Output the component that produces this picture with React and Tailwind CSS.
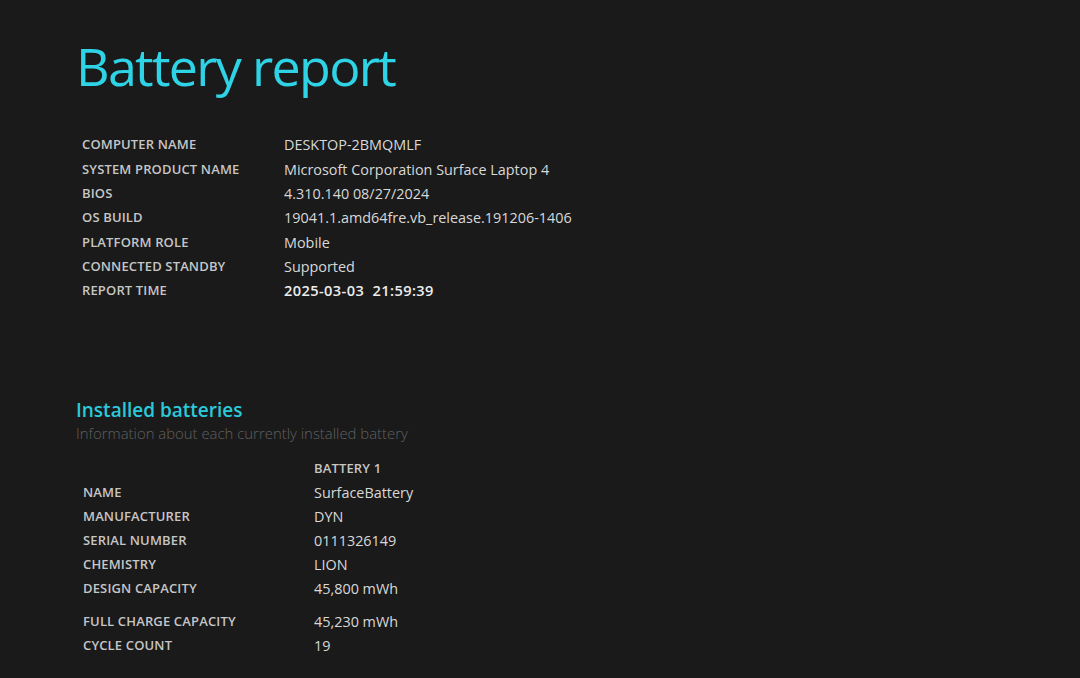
import React from "react";

const info = [
  ["COMPUTER NAME", "DESKTOP-2BMQMLF"],
  ["SYSTEM PRODUCT NAME", "Microsoft Corporation Surface Laptop 4"],
  ["BIOS", "4.310.140 08/27/2024"],
  ["OS BUILD", "19041.1.amd64fre.vb_release.191206-1406"],
  ["PLATFORM ROLE", "Mobile"],
  ["CONNECTED STANDBY", "Supported"],
];

const battery = [
  ["NAME", "SurfaceBattery"],
  ["MANUFACTURER", "DYN"],
  ["SERIAL NUMBER", "0111326149"],
  ["CHEMISTRY", "LION"],
  ["DESIGN CAPACITY", "45,800 mWh"],
];

const font = { fontFamily: '"Open Sans", "Noto Sans", sans-serif' };

const labelCls = "text-[13px] font-semibold text-[#c6c6c6] tracking-[0.15px]";
const valueCls = "text-[14.4px] text-[#d8d8d8]";

export default function App() {
  return (
    <div
      className="w-[1080px] h-[678px] overflow-hidden bg-[#1a1a1a] text-[#dcdcdc]"
      style={font}
    >
      <div className="pl-[76px] pt-[30px]">
        <h1 className="text-[52px] leading-[72px] text-[#2fd3e6] font-normal tracking-[-1.7px]">
          Battery report
        </h1>

        <div className="mt-[31px] pl-[6px] flex flex-col">
          {info.map(([k, v]) => (
            <div key={k} className="flex items-center h-[24.3px]">
              <div className={"w-[202px] " + labelCls}>{k}</div>
              <div className={valueCls}>{v}</div>
            </div>
          ))}
          <div className="flex items-center h-[24.3px]">
            <div className={"w-[202px] " + labelCls}>REPORT TIME</div>
            <div className="text-[14.6px] font-semibold tracking-[0.4px] text-[#ececec]">2025-03-03&nbsp;&nbsp;21:59:39</div>
          </div>
        </div>

        <div className="mt-[95px]">
          <h2 className="text-[19px] leading-[24px] font-semibold text-[#2bc9da]">Installed batteries</h2>
          <p className="text-[14.9px] leading-[22px] font-light text-[#606060]">
            Information about each currently installed battery
          </p>
        </div>

        <div className="mt-[13px] pl-[7px] flex flex-col">
          <div className="flex items-center h-[24px]">
            <div className="w-[231px]" />
            <div className={labelCls}>BATTERY 1</div>
          </div>
          {battery.map(([k, v]) => (
            <div key={k} className="flex items-center h-[24px]">
              <div className={"w-[231px] " + labelCls}>{k}</div>
              <div className={valueCls}>{v}</div>
            </div>
          ))}
          <div className="flex items-center h-[24px] mt-[9px]">
            <div className={"w-[231px] " + labelCls}>FULL CHARGE CAPACITY</div>
            <div className={valueCls}>45,230 mWh</div>
          </div>
          <div className="flex items-center h-[24px]">
            <div className={"w-[231px] " + labelCls}>CYCLE COUNT</div>
            <div className={valueCls}>19</div>
          </div>
        </div>
      </div>
    </div>
  );
}
